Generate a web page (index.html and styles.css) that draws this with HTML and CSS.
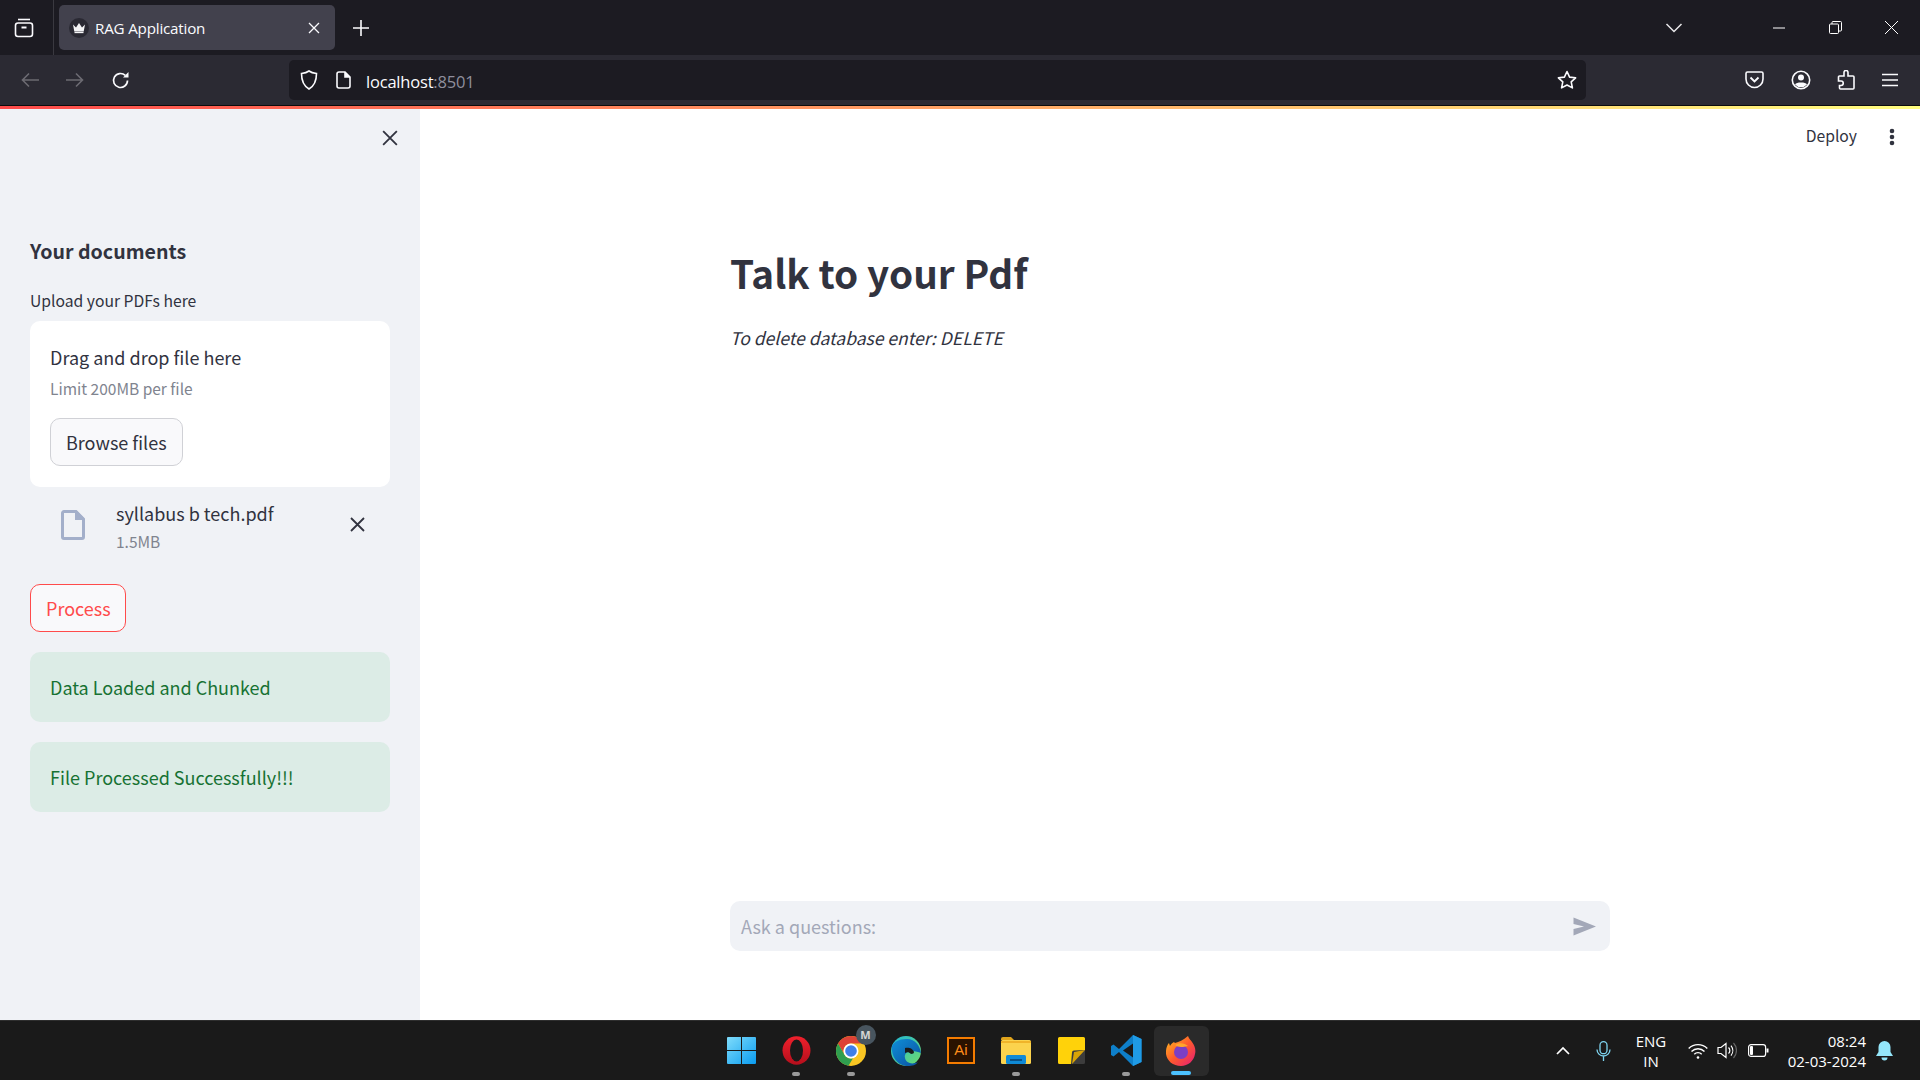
FILE: index.html
```html
<!DOCTYPE html>
<html lang="en">
<head>
<meta charset="utf-8">
<title>RAG Application</title>
<link rel="stylesheet" href="styles.css">
</head>
<body>
<div class="screen">
  <div class="tabbar">
    <div class="tabgroup">
      <svg width="20" height="20" viewBox="0 0 20 20" fill="none" stroke="#fbfbfe" stroke-width="1.6"><path d="M4 1.5h12"/><rect x="1.5" y="5" width="17" height="13.5" rx="2.5"/><path d="M7.5 9.5h5" stroke-width="2"/></svg>
    </div>
    <div class="tab">
      <span class="favicon"><svg width="14" height="12" viewBox="0 0 14 12"><path d="M1 2.5l3 3L7 1l3 4.500 3-3-1.300 7H2.300z" fill="#f4f4f6"/><path d="M2.500 10.500h9" stroke="#f4f4f6" stroke-width="1.300"/></svg></span>
      <span class="tab-title">RAG Application</span>
      <svg class="tab-close" width="12" height="12" viewBox="0 0 12 12" stroke="#fbfbfe" stroke-width="1.300"><path d="M1 1l10 10M11 1L1 11"/></svg>
    </div>
    <svg class="newtab" width="16" height="16" viewBox="0 0 16 16" stroke="#fbfbfe" stroke-width="1.600"><path d="M8 0v16M0 8h16"/></svg>
    <svg class="tablist" width="18" height="10" viewBox="0 0 18 10" fill="none" stroke="#e8e8ea" stroke-width="1.500"><path d="M1.500 1l7.500 7.500L16.500 1"/></svg>
    <div class="winbtn"><svg width="12" height="2" viewBox="0 0 12 2"><path d="M0 1h12" stroke="#fff" stroke-width="1"/></svg></div>
    <div class="winbtn"><svg width="13" height="13" viewBox="0 0 13 13" fill="none" stroke="#fff" stroke-width="1"><rect x="0.500" y="3" width="9" height="9.500" rx="1"/><path d="M3 3V1.500a1 1 0 0 1 1-1h7.500a1 1 0 0 1 1 1V9a1 1 0 0 1-1 1H10"/></svg></div>
    <div class="winbtn"><svg width="13" height="13" viewBox="0 0 13 13" stroke="#fff" stroke-width="1"><path d="M0 0l13 13M13 0L0 13"/></svg></div>
  </div>

  <div class="toolbar">
    <div class="navbtn"><svg width="18" height="16" viewBox="0 0 18 16" fill="none" stroke="#6c6b72" stroke-width="1.600"><path d="M18 8H1.500M8 1.500L1.500 8 8 14.500"/></svg></div>
    <div class="navbtn"><svg width="18" height="16" viewBox="0 0 18 16" fill="none" stroke="#6c6b72" stroke-width="1.600"><path d="M0 8h16.500M10 1.500L16.500 8 10 14.500"/></svg></div>
    <div class="navbtn reload"><svg width="19" height="19" viewBox="0 0 19 19" fill="none" stroke="#fbfbfe" stroke-width="1.700"><path d="M16.500 9.500a7 7 0 1 1-2.200-5.100"/><path d="M17.500 1v5.500H12" fill="#fbfbfe" stroke="none"/></svg></div>
    <div class="urlbar">
      <svg class="shield" width="18" height="20" viewBox="0 0 18 20" fill="none" stroke="#fbfbfe" stroke-width="1.600"><path d="M9 1c2 1.500 4.500 2.200 7.500 2.500 0 7-1.500 12-7.500 15.500C3 15.500 1.500 10.500 1.500 3.500 4.500 3.200 7 2.500 9 1z"/></svg>
      <svg class="pagefile" width="15" height="18" viewBox="0 0 15 18" fill="none" stroke="#fbfbfe" stroke-width="1.600"><path d="M3 1h6l5 5v9a2 2 0 0 1-2 2H3a2 2 0 0 1-2-2V3a2 2 0 0 1 2-2z"/><path d="M9 1v5h5" fill="#fbfbfe"/></svg>
      <span class="url">localhost<span class="port">:8501</span></span>
      <svg class="star" width="20" height="20" viewBox="0 0 20 20" fill="none" stroke="#fbfbfe" stroke-width="1.600" stroke-linejoin="round"><path d="M10 1.500l2.600 5.600 6 .7-4.400 4.100 1.200 6L10 15l-5.400 2.900 1.200-6L1.400 7.800l6-.7z"/></svg>
    </div>
    <div class="tools">
      <svg width="19" height="18" viewBox="0 0 19 18" fill="none" stroke="#fbfbfe" stroke-width="1.600"><path d="M2.500 1h14A1.500 1.500 0 0 1 18 2.500V8a8.500 8.500 0 0 1-17 0V2.500A1.500 1.500 0 0 1 2.500 1z"/><path d="M5.500 6.500l4 4 4-4" stroke-width="1.800"/></svg>
      <svg width="20" height="20" viewBox="0 0 20 20" fill="none" stroke="#fbfbfe" stroke-width="1.600"><circle cx="10" cy="10" r="8.700"/><circle cx="10" cy="7.500" r="3" fill="#fbfbfe" stroke="none"/><path d="M4 14.500c1-1.500 3-2 6-2s5 .5 6 2a8 8 0 0 1-12 0z" fill="#fbfbfe" stroke="none"/></svg>
      <svg width="18" height="20" viewBox="0 0 18 20" fill="none" stroke="#fbfbfe" stroke-width="1.600"><path d="M7 2.500a2 2 0 0 1 4 0V6h5a1 1 0 0 1 1 1v11a1 1 0 0 1-1 1H3.500a1 1 0 0 1-1-1v-2.500H4a2.200 2.200 0 0 0 0-4.500H1.500V7a1 1 0 0 1 1-1H7z"/></svg>
      <svg width="16" height="14" viewBox="0 0 16 14" stroke="#fbfbfe" stroke-width="1.500"><path d="M0 1.500h16M0 7h16M0 12.500h16"/></svg>
    </div>
  </div>
  <div class="progress"></div>

  <div class="app">
    <aside class="sidebar">
      <div class="side-top">
        <svg width="16" height="16" viewBox="0 0 14 14" stroke="#31333f" stroke-width="1.600"><path d="M1 1l12 12M13 1L1 13"/></svg>
      </div>
      <h2 class="side-heading">Your documents</h2>
      <div class="upload-label">Upload your PDFs here</div>
      <section class="dropzone">
        <div class="drop-title">Drag and drop file here</div>
        <div class="drop-limit">Limit 200MB per file</div>
        <button class="btn browse">Browse files</button>
      </section>
      <div class="file-row">
        <svg class="file-icon" width="24" height="30" viewBox="0 0 24 30" fill="none"><path d="M3 1.500h12l7.500 7.500v18a1.500 1.500 0 0 1-1.500 1.500H3A1.500 1.500 0 0 1 1.500 27V3A1.500 1.500 0 0 1 3 1.500z" stroke="#a3afca" stroke-width="3"/><path d="M14 1h2l7 7v2h-9z" fill="#a3afca"/></svg>
        <div class="file-info">
          <div class="file-name">syllabus b tech.pdf</div>
          <div class="file-size">1.5MB</div>
        </div>
        <svg class="file-remove" width="15" height="15" viewBox="0 0 15 15" stroke="#31333f" stroke-width="1.800"><path d="M1 1l13 13M14 1L1 14"/></svg>
      </div>
      <button class="btn process">Process</button>
      <div class="alert">Data Loaded and Chunked</div>
      <div class="alert">File Processed Successfully!!!</div>
    </aside>
    <main class="main">
      <header class="main-header">
        <span class="deploy">Deploy</span>
        <svg class="kebab" width="6" height="18" viewBox="0 0 6 18" fill="#31333f"><circle cx="3" cy="3" r="2.300"/><circle cx="3" cy="9" r="2.300"/><circle cx="3" cy="15" r="2.300"/></svg>
      </header>
      <div class="content">
        <h1 class="title">Talk to your Pdf</h1>
        <p class="note">To delete database enter: DELETE</p>
        <div class="chat">
          <span class="chat-placeholder">Ask a questions:</span>
          <svg width="23" height="19" viewBox="0 0 23 19"><path d="M0.500 0.500L23 9.500 0.500 18.500V12L11 9.500 0.500 7z" fill="#a3a8b8"/></svg>
        </div>
      </div>
    </main>
  </div>

  <footer class="taskbar">
    <div class="apps">
      <div class="app-icon"><svg width="29" height="29" viewBox="0 0 29 29"><defs><linearGradient id="w" x1="0" y1="0" x2="1" y2="1"><stop offset="0" stop-color="#7fdcfb"/><stop offset="1" stop-color="#0a9cf0"/></linearGradient></defs><path d="M1 1h13v13H0V2a1 1 0 0 1 1-1zM15 1h13a1 1 0 0 1 1 1v12H15zM0 15h14v13H1a1 1 0 0 1-1-1zM15 15h14v12a1 1 0 0 1-1 1H15z" fill="url(#w)"/></svg></div>
      <div class="app-icon running"><svg width="29" height="29" viewBox="0 0 29 29"><defs><linearGradient id="o" x1="0" y1="0" x2="0" y2="1"><stop offset="0" stop-color="#f0202c"/><stop offset="1" stop-color="#b50f1c"/></linearGradient></defs><ellipse cx="14.500" cy="14.500" rx="14" ry="14.200" fill="url(#o)"/><ellipse cx="14.500" cy="14.500" rx="6.500" ry="11" fill="#1a1a1a"/></svg></div>
      <div class="app-icon running chrome">
        <svg width="30" height="30" viewBox="0 0 30 30"><circle cx="15" cy="15" r="15" fill="#f9c623"/><path d="M15 0a15 15 0 0 1 13 7.500H15a7.500 7.500 0 0 0-6.500 11.300L2 7.500A15 15 0 0 1 15 0z" fill="#dd4237"/><path d="M2 7.500l6.500 11.300A7.500 7.500 0 0 0 17 22.200L12.500 29.800A15 15 0 0 1 2 7.500z" fill="#2f9e4f"/><circle cx="15" cy="15" r="7.500" fill="#fff"/><circle cx="15" cy="15" r="5.800" fill="#3f7fe8"/></svg>
        <span class="badge">M</span>
      </div>
      <div class="app-icon"><svg width="30" height="30" viewBox="0 0 30 30"><defs><linearGradient id="e1" x1="0" y1="0" x2="1" y2="1"><stop offset="0" stop-color="#1fb6d8"/><stop offset="1" stop-color="#6fdc6a"/></linearGradient><linearGradient id="e2" x1="0" y1="0" x2="1" y2="1"><stop offset="0" stop-color="#0f8fd8"/><stop offset="1" stop-color="#0a4f9e"/></linearGradient></defs><circle cx="15" cy="15" r="15" fill="url(#e1)"/><path d="M1 10C0 20 6 30 17 30c4 0 8-1 10-4-6 3-12 1-13-4-1-4 2-7 7-7 4 0 6 1 9 2C29 9 23 2 15 3 8 3 3 6 1 10z" fill="url(#e2)"/><path d="M14 12c3-1 8 0 9 4 0 1-1 2-3 2-2-2-4-2-6-1z" fill="#1a1a1a"/></svg></div>
      <div class="app-icon"><span class="ai">Ai</span></div>
      <div class="app-icon running"><svg width="30" height="27" viewBox="0 0 30 27"><path d="M0 2a2 2 0 0 1 2-2h8l3 3h-13z" fill="#e0a41c"/><rect x="0" y="3" width="30" height="24" rx="1.500" fill="#fbd34d"/><path d="M0 5h30" stroke="#f0b429" stroke-width="2"/><rect x="5" y="18" width="20" height="9" rx="1.500" fill="#0f8ad6"/><path d="M9 23h12" stroke="#083f6e" stroke-width="1.500"/></svg></div>
      <div class="app-icon"><svg width="27" height="27" viewBox="0 0 27 27"><path d="M1.500 0h24A1.500 1.500 0 0 1 27 1.500V13L13 27H1.500A1.500 1.500 0 0 1 0 25.500v-24A1.500 1.500 0 0 1 1.500 0z" fill="#ffd20a"/><path d="M27 13v12.500a1.500 1.500 0 0 1-1.500 1.500H13l1-11.500a2 2 0 0 1 2-2z" fill="#3c3c3c"/><path d="M14 27l13-14-11 2z" fill="#d9a406"/></svg></div>
      <div class="app-icon running"><svg width="31" height="31" viewBox="0 0 31 31"><path d="M22 0l8.500 4v23L22 31 8 17 2.500 21.500 0 20v-9l2.500-1.500L8 14z" fill="#0e7fc9"/><path d="M22 0l8.500 4v23L22 31z" fill="#1f9be6"/><path d="M22 8.500L12 15.500l10 7z" fill="#1a1a1a"/></svg></div>
      <div class="app-icon active"><svg width="30" height="30" viewBox="0 0 30 30"><defs><linearGradient id="f1" x1="0" y1="0" x2="1" y2="1"><stop offset="0" stop-color="#ffc21e"/><stop offset=".5" stop-color="#ff5a2c"/><stop offset="1" stop-color="#e3197a"/></linearGradient></defs><path d="M22 0c1 3 3 4 4 6 3 4 4 8 3 12-1 7-7 12-14 12C7 30 1 25 0 18-.5 14 1 9 3 7l1 3c1-2 3-4 5-4-1 0-1 1 0 1 4-1 8-3 13-7z" fill="url(#f1)"/><circle cx="15" cy="16" r="7" fill="#7b3fc4"/><path d="M9 9c4-3 10-2 13 1l-5 1c-3 0-5 0-8-2z" fill="#ffa52c"/></svg></div>
    </div>
    <div class="tray">
      <svg class="tray-chevron" width="14" height="9" viewBox="0 0 14 9" fill="none" stroke="#fff" stroke-width="1.700"><path d="M1 8l6-6 6 6"/></svg>
      <svg class="tray-mic" width="15" height="20" viewBox="0 0 15 20" fill="none" stroke="#7ed4f0" stroke-width="1.300"><rect x="4" y="0.700" width="7" height="12" rx="3.500"/><path d="M1 8.500a6.500 6.500 0 0 0 13 0M7.500 15v5"/></svg>
      <div class="tray-lang">ENG<br>IN</div>
      <svg class="tray-wifi" width="20" height="16" viewBox="0 0 20 16" fill="none" stroke="#fff" stroke-width="1.400"><path d="M.7 5.500a13 13 0 0 1 18.600 0M3.500 8.500a9 9 0 0 1 13 0M6.300 11.300a5 5 0 0 1 7.400 0"/><circle cx="10" cy="14.500" r="1.300" fill="#fff" stroke="none"/></svg>
      <svg class="tray-volume" width="20" height="17" viewBox="0 0 20 17" fill="none" stroke="#fff" stroke-width="1.200"><path d="M1 5.500h3l5-4v14l-5-4H1z"/><path d="M11.500 5.500a4 4 0 0 1 0 6"/><path d="M14 3.500a8 8 0 0 1 0 10"/><path d="M16.500 1a11 11 0 0 1 0 15" stroke="#666"/></svg>
      <svg class="tray-battery" width="21" height="13" viewBox="0 0 21 13" fill="none" stroke="#fff" stroke-width="1.200"><rect x="0.600" y="0.600" width="17" height="11.800" rx="2.500"/><rect x="2" y="2" width="3" height="9" rx="1" fill="#fff" stroke="none"/><path d="M19.500 4.500v4" stroke-width="2"/></svg>
      <div class="tray-clock">08:24<br>02-03-2024</div>
      <svg class="tray-bell" width="17" height="20" viewBox="0 0 17 20" fill="#94e6fa"><path d="M8.500 0a6 6 0 0 1 6 6v5l2.500 4H0l2.500-4V6a6 6 0 0 1 6-6z"/><path d="M5.500 16.500h6a3 3 0 0 1-6 0z"/></svg>
    </div>
  </footer>
</div>
</body>
</html>
```

FILE: styles.css
```css
* { box-sizing: border-box; }
html, body { margin: 0; padding: 0; }
body { background: #fff; font-family: "Noto Sans CJK SC", "Noto Sans", sans-serif; color: #31333f; }
svg { display: block; flex: none; }
.screen { width: 1920px; height: 1080px; display: flex; flex-direction: column; overflow: hidden; }

/* browser chrome */
.tabbar { height: 55px; background: #1c1b22; display: flex; align-items: center; font-family: "Open Sans", sans-serif; }
.tabgroup { width: 54px; height: 55px; border-right: 1px solid #3a3940; display: flex; align-items: center; justify-content: center; padding-right: 5px; }
.tab { width: 276px; height: 45px; margin-left: 5px; background: #42414d; border-radius: 5px; display: flex; align-items: center; padding: 0 15px 0 10px; color: #fbfbfe; font-size: 15.200px; }
.favicon { width: 20px; height: 20px; border-radius: 50%; background: #2a2933; display: flex; align-items: center; justify-content: center; margin-right: 6px; }
.tab-title { flex: 1; white-space: nowrap; letter-spacing: -.2px; }
.newtab { margin-left: 18px; }
.tablist { margin-left: auto; margin-right: 68px; }
.winbtn { width: 56.500px; height: 55px; display: flex; align-items: center; justify-content: center; }
.toolbar { background: #2b2a33; display: flex; align-items: center; padding-left: 7px; flex: none; border-bottom: 1px solid #0c0c0d; height: 51px; }
.navbtn { width: 45px; height: 40px; display: flex; align-items: center; justify-content: center; }
.reload { margin-left: 1px; }
.urlbar { width: 1297px; height: 40px; margin-left: 146px; background: #1c1b22; border-radius: 5px; display: flex; align-items: center; padding: 0 9px 0 11px; font-family: "Open Sans", sans-serif; font-size: 16.500px; color: #fbfbfe; }
.pagefile { margin-left: 18px; }
.url { margin-left: 15px; flex: 1; letter-spacing: -.2px; position: relative; top: 1px; }
.port { color: #8f8f9d; }
.tools { display: flex; align-items: center; margin-left: 159px; gap: 26.500px; }
.progress { height: 3px; flex: none; background: linear-gradient(90deg, #ff4b4b, #fffd80); }

/* streamlit app */
.app { flex: 1; display: flex; min-height: 0; }
.sidebar { width: 420px; background: #f0f2f6; padding: 0 30px; display: flex; flex-direction: column; }
.side-top { height: 58px; display: flex; align-items: center; justify-content: flex-end; margin-right: -8px; }
.side-heading { margin: 63px 0 0; font-size: 19.600px; line-height: 42px; font-weight: 600; }
.upload-label { margin-top: 17px; font-size: 15.700px; line-height: 24px; }
.dropzone { margin-top: 8px; height: 166px; background: #fff; border-radius: 10px; padding: 20px; }
.drop-title { font-size: 18px; line-height: 32px; }
.drop-limit { font-size: 15.500px; line-height: 24px; margin-top: 3px; color: #80848f; }
.btn { display: block; font: inherit; font-size: 18px; height: 48px; padding: 0 15px; border-radius: 10px; background: #f9f9fb; cursor: pointer; }
.browse { margin-top: 18px; border: 1px solid #d0d1d6; color: #31333f; }
.file-row { display: flex; align-items: center; height: 75px; padding-left: 31px; }
.file-info { margin-left: 31px; flex: 1; padding-top: 2px; }
.file-name { font-size: 18px; line-height: 28px; }
.file-size { font-size: 15.500px; line-height: 24px; color: #80848f; margin-top: 2px; }
.file-remove { margin-right: 25px; }
.process { margin-top: 22px; width: 96px; border: 1px solid #ff4b4b; color: #ff4b4b; align-self: flex-start; white-space: nowrap; }
.alert { margin-top: 20px; height: 70px; background: #dcece6; border-radius: 10px; padding: 0 20px; display: flex; align-items: center; font-size: 18px; color: #177233; }
.main { flex: 1; display: flex; flex-direction: column; min-width: 0; position: relative; }
.main-header { height: 56px; display: flex; align-items: center; justify-content: flex-end; padding-right: 25px; flex: none; }
.deploy { font-size: 15.700px; margin-right: 32px; position: relative; top: -2px; }
.content { flex: 1; width: 880px; margin: 0 auto; display: flex; flex-direction: column; padding-bottom: 69px; }
.title { margin: 75px 0 0; font-size: 38.700px; line-height: 64px; font-weight: 700; }
.note { margin: 18px 0 0; font-size: 17.500px; line-height: 32px; font-style: italic; }
.chat { margin-top: auto; height: 50px; background: #f0f2f6; border-radius: 10px; display: flex; align-items: center; justify-content: space-between; padding: 0 14px 0 11px; }
.chat-placeholder { font-size: 18px; color: #a3a8b8; }

/* taskbar */
.taskbar { height: 60px; flex: none; background: #1a1a1a; border-top: 1px solid #2e2e2e; display: flex; align-items: center; color: #fff; font-family: "Open Sans", sans-serif; position: relative; }
.apps { display: flex; margin-left: 713.500px; height: 50px; }
.app-icon { width: 55px; height: 50px; display: flex; align-items: center; justify-content: center; position: relative; }
.app-icon.running::after { content: ""; position: absolute; left: 50%; bottom: 0; width: 8px; height: 4px; margin-left: -4px; border-radius: 2px; background: #9a9a9a; }
.app-icon.active { background: #2a2a2a; border-radius: 6px; }
.app-icon.active::after { content: ""; position: absolute; left: 50%; bottom: 1px; width: 20px; height: 4px; margin-left: -10px; border-radius: 2px; background: #4cc2ff; }
.badge { position: absolute; right: 3px; top: -1px; width: 20px; height: 20px; border-radius: 50%; background: #48555f; color: #d5d5d5; font-size: 11px; font-weight: 700; display: flex; align-items: center; justify-content: center; }
.ai { width: 28px; height: 27px; border: 2px solid #f57c00; background: #2a1200; color: #ff8c1a; font-size: 15px; line-height: 22px; text-align: center; font-family: "Liberation Sans", sans-serif; }
.tray { position: absolute; right: 27px; top: 0; height: 59px; display: flex; align-items: center; }
.tray-mic { margin-left: 26px; }
.tray-lang { width: 40px; margin-left: 20px; text-align: center; font-size: 15px; line-height: 20px; }
.tray-wifi { margin-left: 17px; }
.tray-volume { margin-left: 9px; }
.tray-battery { margin-left: 11px; }
.tray-clock { width: 90px; margin-left: 7px; text-align: right; font-size: 15px; line-height: 20px; }
.tray-bell { margin-left: 10px; }
```
